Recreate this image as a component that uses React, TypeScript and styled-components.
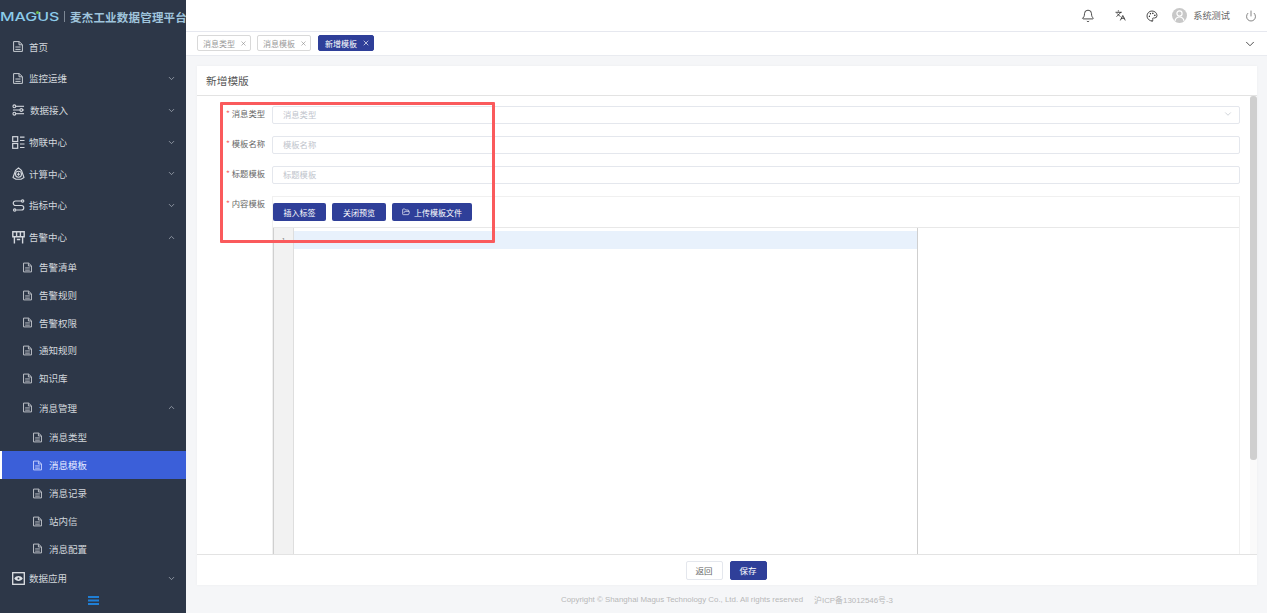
import React from "react";
import styled, { createGlobalStyle } from "styled-components";
import { Bell, Languages, Palette, Power, ChevronDown, ChevronUp, X, FolderOpen } from "lucide-react";

const Global = createGlobalStyle`
  html, body { margin: 0; padding: 0; height: 100%; overflow: hidden; }
  body { font-family: "Noto Sans CJK SC", "Noto Sans", sans-serif; }
  * { box-sizing: border-box; }
`;

const Page = styled.div`
  display: flex;
  width: 1267px;
  height: 613px;
  background: #f5f6f8;
  position: relative;
  overflow: hidden;
`;

const Sidebar = styled.aside`
  width: 186px;
  flex: none;
  background: #2d3748;
  display: flex;
  flex-direction: column;
`;

const Logo = styled.div`
  height: 31px;
  flex: none;
  display: flex;
  align-items: center;
  white-space: nowrap;
  overflow: hidden;
  padding-top: 2px;
`;

const LogoMark = styled.span`
  position: relative;
  width: 60px;
  flex: none;
  height: 16px;
  display: flex;
  align-items: center;
`;

const MarkText = styled.span`
  font: 500 12px Inter, "Liberation Sans", sans-serif;
  transform: scaleX(1.33);
  transform-origin: left center;
  color: #8ccbea;
`;

const MarkDot = styled.span`
  position: absolute;
  left: 36px;
  top: 2px;
  width: 3px;
  height: 3px;
  border-radius: 50%;
  background: #6fbf4a;
`;

const LogoBar = styled.span`
  width: 1px;
  height: 11px;
  background: #7d8794;
  margin: 0 5px 0 4px;
  flex: none;
`;

const LogoTitle = styled.span`
  font-size: 11.5px;
  font-weight: 700;
  letter-spacing: 0.2px;
  color: #9fc4dc;
`;

const Menu = styled.nav`
  display: flex;
  flex-direction: column;
  flex: 1;
`;

const Row = styled.div<{ $h: number; $pl: number; $gap: number; $active?: boolean }>`
  height: ${(p) => p.$h}px;
  flex: none;
  display: flex;
  align-items: center;
  padding-left: ${(p) => p.$pl}px;
  padding-right: 10px;
  gap: ${(p) => p.$gap}px;
  font-size: 9.5px;
  color: ${(p) => (p.$active ? "#e6ecff" : "#d3d7dd")};
  background: ${(p) => (p.$active ? "#3b5fd9" : "transparent")};
  border-left: ${(p) => (p.$active ? "2px solid #fff" : "none")};
  svg { flex: none; }
`;

const RowLabel = styled.span`
  flex: 1;
`;

const Toggle = styled.div`
  height: 13px;
  flex: none;
  display: flex;
  align-items: center;
  justify-content: center;
`;

const Main = styled.main`
  flex: 1;
  min-width: 0;
  display: flex;
  flex-direction: column;
`;

const Topbar = styled.header`
  height: 32px;
  flex: none;
  background: #fff;
  border-bottom: 1px solid #e6e8ef;
  display: flex;
  align-items: center;
  justify-content: flex-end;
  padding-right: 10px;
  color: #222;
`;

const TopIcon = styled.span<{ $mr: number }>`
  display: flex;
  margin-right: ${(p) => p.$mr}px;
`;

const Avatar = styled.span`
  width: 15px;
  height: 15px;
  border-radius: 50%;
  background: #c8c8c8;
  display: flex;
  align-items: center;
  justify-content: center;
  margin-right: 6px;
  overflow: hidden;
`;

const UserName = styled.span`
  font-size: 9.2px;
  color: #666;
  margin-right: 15px;
  margin-bottom: 2px;
`;

const Tabs = styled.div`
  height: 24px;
  flex: none;
  background: #fff;
  border-bottom: 1px solid #e9ebf0;
  display: flex;
  align-items: center;
  gap: 6px;
  padding: 0 10px 1px 11px;
`;

const Tab = styled.span<{ $active?: boolean }>`
  height: 16px;
  display: flex;
  align-items: center;
  gap: 5px;
  margin-left: ${(p) => (p.$active ? "1px" : "0")};
  padding: ${(p) => (p.$active ? "0 3px 0 6px" : "0 3px 0 5px")};
  border-radius: 2px;
  font-size: 8px;
  border: 1px solid ${(p) => (p.$active ? "#2f3f99" : "#d9d9d9")};
  background: ${(p) => (p.$active ? "#2f3f99" : "#fff")};
  color: ${(p) => (p.$active ? "#fff" : "#999")};
`;

const TabsEnd = styled.span`
  margin-left: auto;
  margin-top: 1px;
  display: flex;
  color: #444;
`;

const Content = styled.div`
  flex: 1;
  min-height: 0;
  padding: 10px 10px 0 11px;
  display: flex;
  flex-direction: column;
`;

const Card = styled.section`
  height: 519px;
  flex: none;
  background: #fff;
  display: flex;
  flex-direction: column;
  box-shadow: 0 0 3px rgba(0, 0, 0, 0.04);
`;

const CardHead = styled.div`
  height: 30px;
  flex: none;
  border-bottom: 1px solid #e3e3e3;
  padding-left: 9px;
  display: flex;
  align-items: center;
  font-size: 10.7px;
  color: #555;
`;

const CardBody = styled.div`
  flex: 1;
  min-height: 0;
  display: flex;
  overflow: hidden;
`;

const Form = styled.div`
  flex: 1;
  min-width: 0;
  padding: 10px 10px 0 0;
  display: flex;
  flex-direction: column;
  gap: 12px;
`;

const Field = styled.div`
  display: flex;
`;

const Label = styled.label`
  width: 75px;
  flex: none;
  padding-right: 7px;
  height: 18px;
  text-align: right;
  font-size: 8.3px;
  line-height: 15px;
  color: #666;
  &::before {
    content: "* ";
    color: #f56c6c;
  }
`;

const InputBox = styled.div`
  flex: 1;
  height: 18px;
  border: 1px solid #e4e7ed;
  border-radius: 2px;
  display: flex;
  align-items: center;
  justify-content: space-between;
  padding: 0 6px 2px 10px;
  font-size: 8.3px;
  color: #c0c4cc;
`;

const EditorWrap = styled.div`
  flex: 1;
  min-width: 0;
  border: 1px solid #f0f0f0;
  border-bottom: none;
`;

const EditorBar = styled.div`
  height: 31px;
  display: flex;
  align-items: flex-start;
  padding-top: 6px;
  gap: 6px;
  border-bottom: 1px solid #e8e8e8;
`;

const Btn = styled.button<{ $w: number }>`
  width: ${(p) => p.$w}px;
  height: 18px;
  padding: 0;
  border: none;
  border-radius: 2px;
  background: #2f3f99;
  color: #fff;
  font: 8px "Noto Sans CJK SC", sans-serif;
  display: flex;
  align-items: center;
  justify-content: center;
  gap: 4px;
`;

const Editor = styled.div`
  width: 645px;
  height: 400px;
  border-left: 1px solid #cfcfcf;
  border-right: 1px solid #cfcfcf;
  display: flex;
  padding-top: 3px;
`;

const Gutter = styled.div`
  width: 20px;
  flex: none;
  background: #f2f2f2;
  border-right: 1px solid #dedede;
  font-size: 7px;
  color: #888;
  text-align: center;
  line-height: 20px;
  margin-top: -3px;
  padding-top: 2px;
`;

const ActiveLine = styled.div`
  flex: 1;
  height: 18px;
  background: #e8f1fc;
`;

const Scrollbar = styled.div`
  width: 7px;
  flex: none;
  position: relative;
  background: #fafafa;
  &::after {
    content: "";
    position: absolute;
    top: 0;
    left: 0;
    right: 0;
    height: 364px;
    border-radius: 3px;
    background: #cfcfcf;
  }
`;

const CardFoot = styled.div`
  height: 31px;
  flex: none;
  border-top: 1px solid #e3e3e3;
  display: flex;
  align-items: center;
  justify-content: center;
  gap: 7px;
  padding-right: 2px;
`;

const FootBtn = styled.button<{ $primary?: boolean }>`
  width: 37px;
  height: 19px;
  padding: 0;
  border-radius: 2px;
  border: 1px solid ${(p) => (p.$primary ? "#2f3f99" : "#e4e7ed")};
  background: ${(p) => (p.$primary ? "#2f3f99" : "#fff")};
  color: ${(p) => (p.$primary ? "#fff" : "#666")};
  font: 8.5px "Noto Sans CJK SC", sans-serif;
`;

const Copyright = styled.footer`
  flex: 1;
  display: flex;
  align-items: center;
  justify-content: center;
  gap: 11px;
  font: 7.9px "Liberation Sans", "Noto Sans CJK SC", sans-serif;
  color: #b8b8b8;
`;

const Highlight = styled.div`
  position: absolute;
  left: 220px;
  top: 102px;
  width: 275px;
  height: 141px;
  border: 3px solid #fa5a5c;
  border-radius: 1px;
  pointer-events: none;
`;

type IconProps = { c?: string };
const Sliders = ({ c = "#d3d7dd" }: IconProps) => (
  <svg width="13" height="12" viewBox="0 0 14 13" fill="none" stroke={c} strokeWidth="1.2">
    <circle cx="2.5" cy="2.5" r="1.5" /><path d="M4 2.5h9" />
    <circle cx="10" cy="6.5" r="1.5" /><path d="M1 6.5h7.5M11.5 6.5H13" />
    <circle cx="2.5" cy="10.5" r="1.5" /><path d="M4 10.5h9" />
  </svg>
);
const Grid = ({ c = "#d3d7dd" }: IconProps) => (
  <svg width="13" height="13" viewBox="0 0 13 13" fill="none" stroke={c} strokeWidth="1.2">
    <rect x="0.7" y="0.7" width="5" height="4.8" /><rect x="0.7" y="7.5" width="5" height="4.8" />
    <path d="M8 1.2h4.500M8 4.500h4.500M8 8h4.500M8 11.500h4.500" />
  </svg>
);
const Calc = ({ c = "#d3d7dd" }: IconProps) => (
  <svg width="13" height="13" viewBox="0 0 13 13" fill="none" stroke={c} strokeWidth="1.1" strokeLinejoin="round">
    <path d="M6.500.8 9.500 3.500 12 10.500 9 12.300H4L1 10.500 3.500 3.500z" />
    <circle cx="6.500" cy="7.200" r="3" /><path d="M6.500 5.600v3.200M4.900 7.200h3.200" />
  </svg>
);
const Route = ({ c = "#d3d7dd" }: IconProps) => (
  <svg width="13" height="13" viewBox="0 0 13 13" fill="none" stroke={c} strokeWidth="1.2">
    <path d="M9 2H3.500a2.200 2.200 0 0 0 0 4.500h6a2.200 2.200 0 0 1 0 4.500H4.300" />
    <circle cx="10.600" cy="2" r="1.200" /><circle cx="2.700" cy="11" r="1.200" />
  </svg>
);
const Shop = ({ c = "#d3d7dd" }: IconProps) => (
  <svg width="13" height="13" viewBox="0 0 13 13" fill="none" stroke={c} strokeWidth="1.4">
    <path d="M.8.8h11.400v5H.8zM4.600.8v5M8.400.8v5M2.400 5.800V12.600M10.600 5.800V12.600M4.800 8.500h3.400" />
  </svg>
);
const Framed = ({ c = "#dfe2e6" }: IconProps) => (
  <svg width="13" height="13" viewBox="0 0 13 13" fill="none" stroke={c} strokeWidth="1.300">
    <rect x="0.700" y="0.700" width="11.600" height="11.600" />
    <path d="M2.200 6.500C4 3.200 9 3.200 10.800 6.500 9 9.800 4 9.800 2.200 6.500z" fill={c} stroke="none" />
    <circle cx="6.500" cy="6.500" r="1" fill="#2d3748" stroke="none" />
  </svg>
);
const Doc = ({ c = "#c9cdd3", w = 10, h = 11 }: IconProps & { w?: number; h?: number }) => (
  <svg width={w} height={h} viewBox="0 0 10 11" fill="none" stroke={c} strokeWidth="1">
    <path d="M.6.6h5.600l3.200 3v6.800H.6z" />
    <path d="M6 .8v3h3.200M2.400 6h5.200M2.400 8.400h5.200" />
  </svg>
);

const Chev = ({ up }: { up?: boolean }) =>
  up ? <ChevronUp size={9} color="#a8afba" /> : <ChevronDown size={9} color="#a8afba" />;

type Item = { t: string; h: number; pl: number; gap: number; i: React.ReactNode; arrow?: "u" | "d"; active?: boolean };

const sub = <Doc w={9} h={11} />;

const items: Item[] = [
  { t: "首页", h: 31, pl: 13, gap: 6, i: <Doc /> },
  { t: "监控运维", h: 32, pl: 13, gap: 6, i: <Doc />, arrow: "d" },
  { t: "数据接入", h: 32, pl: 12, gap: 5, i: <Sliders />, arrow: "d" },
  { t: "物联中心", h: 32, pl: 12, gap: 4, i: <Grid />, arrow: "d" },
  { t: "计算中心", h: 31, pl: 12, gap: 4, i: <Calc />, arrow: "d" },
  { t: "指标中心", h: 32, pl: 12, gap: 4, i: <Route />, arrow: "d" },
  { t: "告警中心", h: 32, pl: 12, gap: 4, i: <Shop />, arrow: "u" },
  { t: "告警清单", h: 28, pl: 23, gap: 7, i: sub },
  { t: "告警规则", h: 28, pl: 23, gap: 7, i: sub },
  { t: "告警权限", h: 27, pl: 23, gap: 7, i: sub },
  { t: "通知规则", h: 28, pl: 23, gap: 7, i: sub },
  { t: "知识库", h: 28, pl: 23, gap: 7, i: sub },
  { t: "消息管理", h: 31, pl: 23, gap: 7, i: sub, arrow: "u" },
  { t: "消息类型", h: 28, pl: 33, gap: 7, i: sub },
  { t: "消息模板", h: 28, pl: 31, gap: 7, i: <Doc w={9} h={11} c="#cfd8ff" />, active: true },
  { t: "消息记录", h: 28, pl: 33, gap: 7, i: sub },
  { t: "站内信", h: 28, pl: 33, gap: 7, i: sub },
  { t: "消息配置", h: 27, pl: 33, gap: 7, i: sub },
  { t: "数据应用", h: 32, pl: 12, gap: 4, i: <Framed />, arrow: "d" },
];

export default function App() {
  return (
    <Page>
      <Global />
      <Sidebar>
        <Logo>
          <LogoMark>
            <MarkText>MAGUS</MarkText>
            <MarkDot />
          </LogoMark>
          <LogoBar />
          <LogoTitle>麦杰工业数据管理平台</LogoTitle>
        </Logo>
        <Menu>
          {items.map((it) => (
            <Row key={it.t} $h={it.h} $pl={it.pl} $gap={it.gap} $active={it.active}>
              {it.i}
              <RowLabel>{it.t}</RowLabel>
              {it.arrow && <Chev up={it.arrow === "u"} />}
            </Row>
          ))}
          <Toggle>
            <svg width="11" height="9" viewBox="0 0 11 9" fill="#1f7fd6">
              <rect width="11" height="2" /><rect y="3.500" width="11" height="2" /><rect y="7" width="11" height="2" />
            </svg>
          </Toggle>
        </Menu>
      </Sidebar>
      <Main>
        <Topbar>
          <TopIcon $mr={20}><Bell size={14} strokeWidth={1.4} /></TopIcon>
          <TopIcon $mr={20}><Languages size={11} strokeWidth={1.8} /></TopIcon>
          <TopIcon $mr={14}><Palette size={12} strokeWidth={1.6} /></TopIcon>
          <Avatar>
            <svg width="11" height="13" viewBox="0 0 11 13" fill="none" stroke="#fff" strokeWidth="1.2">
              <circle cx="5.500" cy="4.500" r="2.600" /><path d="M1 12c.5-3 2-4 4.500-4s4 1 4.500 4" />
            </svg>
          </Avatar>
          <UserName>系统测试</UserName>
          <TopIcon $mr={0}><Power size={12} strokeWidth={1.3} color="#444" /></TopIcon>
        </Topbar>
        <Tabs>
          <Tab>消息类型<X size={7} color="#888" /></Tab>
          <Tab>消息模板<X size={7} color="#888" /></Tab>
          <Tab $active>新增模板<X size={8} color="#fff" /></Tab>
          <TabsEnd><ChevronDown size={14} strokeWidth={1.6} /></TabsEnd>
        </Tabs>
        <Content>
          <Card>
            <CardHead>新增模版</CardHead>
            <CardBody>
              <Form>
                <Field>
                  <Label>消息类型</Label>
                  <InputBox>消息类型<ChevronDown size={10} color="#c8ccd2" /></InputBox>
                </Field>
                <Field>
                  <Label>模板名称</Label>
                  <InputBox>模板名称</InputBox>
                </Field>
                <Field>
                  <Label>标题模板</Label>
                  <InputBox>标题模板</InputBox>
                </Field>
                <Field>
                  <Label>内容模板</Label>
                  <EditorWrap>
                    <EditorBar>
                      <Btn $w={53}>插入标签</Btn>
                      <Btn $w={54}>关闭预览</Btn>
                      <Btn $w={80}><FolderOpen size={8} />上传模板文件</Btn>
                    </EditorBar>
                    <Editor>
                      <Gutter>1</Gutter>
                      <ActiveLine />
                    </Editor>
                  </EditorWrap>
                </Field>
              </Form>
              <Scrollbar />
            </CardBody>
            <CardFoot>
              <FootBtn>返回</FootBtn>
              <FootBtn $primary>保存</FootBtn>
            </CardFoot>
          </Card>
          <Copyright>
            <span>Copyright © Shanghai Magus Technology Co., Ltd. All rights reserved</span>
            <span>沪ICP备13012546号-3</span>
          </Copyright>
        </Content>
      </Main>
      <Highlight />
    </Page>
  );
}
